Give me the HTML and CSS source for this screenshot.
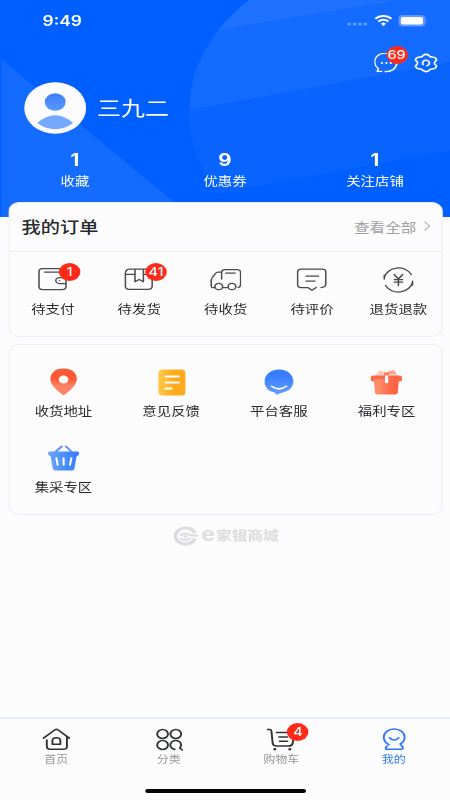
FILE: index.html
```html
<!DOCTYPE html>
<html lang="zh-CN">
<head>
<meta charset="utf-8">
<title>我的</title>
<link rel="stylesheet" href="styles.css">
</head>
<body>
<div class="screen">
  <header class="hero">
    <svg class="hero-bg" width="375" height="217" viewBox="0 0 375 217">
      <defs><clipPath id="disc"><circle cx="307.5" cy="112" r="150"/></clipPath></defs>
      <path d="M1 59L160 217H1z" fill="#146bff"/>
      <g clip-path="url(#disc)">
        <path d="M150 0h225v150L187 192l-37 8z" fill="#0863ff"/>
        <path d="M150 0h225v62L158 110z" fill="#146bff"/>
        <path d="M150 0h183L150 36z" fill="#1f71ff"/>
      </g>
    </svg>
    <div class="status">
      <span class="time">9:49</span>
      <div class="signals">
        <svg width="17" height="4" viewBox="0 0 17 4" fill="#6ba0ff"><circle cx="2" cy="2" r="1.500"/><circle cx="6.500" cy="2" r="1.500"/><circle cx="11" cy="2" r="1.500"/><circle cx="15.200" cy="2" r="1.500"/></svg>
        <svg class="wifi" width="15" height="11" viewBox="0 0 15 11" fill="none" stroke="#fff" stroke-width="2"><path d="M.7 3.700Q7.500-1.700 14.300 3.700M3.300 6.500Q7.500 3 11.700 6.500"/><path d="M7.500 7.300L9.700 8.800 7.500 11 5.300 8.800z" fill="#fff" stroke="none"/></svg>
        <svg width="25" height="12" viewBox="0 0 25 12"><rect width="22.500" height="11.500" rx="3.500" fill="#5f99ff"/><rect x="2" y="2" width="18.500" height="7.500" rx="1.800" fill="#fff"/><path d="M23.500 4q1.300 1.800 0 3.600z" fill="#8bb4ff"/></svg>
      </div>
    </div>
    <div class="tools">
      <span class="icon">
        <svg width="20" height="20" viewBox="0 0 20 20" fill="none" stroke="#fff" stroke-width="1.300" stroke-linecap="round"><path d="M14.500 2.300A8.600 8.600 0 0 0 3.200 15.400L2.500 18.300H6M9 18.500A8.600 8.600 0 0 0 18.600 9.500"/><path d="M6.300 10h.01M10 10h.01M13.700 10h.01" stroke-width="1.900"/></svg>
        <b class="badge">69</b>
      </span>
      <svg width="20" height="20" viewBox="0 0 20 20" fill="none" stroke="#fff" stroke-width="1.500" stroke-linecap="round" stroke-linejoin="round"><path d="M7.400 2.600Q10 .2 12.600 2.600Q13.400 4.200 15.200 4Q18.700 4.300 18.700 7.200Q17 8.800 17 10Q17 11.200 18.700 12.800Q18.700 15.700 15.200 16Q13.400 15.800 12.600 17.400Q10 19.800 7.400 17.400Q6.600 15.800 4.800 16Q1.300 15.700 1.300 12.800Q3 11.200 3 10Q3 8.800 1.300 7.200Q1.300 4.300 4.800 4Q6.600 4.200 7.400 2.600z"/><path d="M7.600 11.500A2.800 2.800 0 1 1 10.800 12.700"/></svg>
    </div>
    <div class="profile">
      <svg width="52" height="52" viewBox="0 0 52 52"><defs><linearGradient id="av" x2="0" y2="1"><stop stop-color="#3c7ff8"/><stop offset="1" stop-color="#5a98ff"/></linearGradient></defs><circle cx="26" cy="26" r="25.800" fill="#fcfcfe"/><circle cx="26" cy="20" r="8.700" fill="url(#av)"/><path d="M11 41Q26 25.500 41 41Q26 53.500 11 41z" fill="#74a9ff"/></svg>
      <span class="name">三九二</span>
    </div>
    <div class="stats">
      <div><b>1</b><span>收藏</span></div>
      <div><b>9</b><span>优惠券</span></div>
      <div><b>1</b><span>关注店铺</span></div>
    </div>
  </header>

  <section class="card orders">
    <div class="card-head">
      <h2>我的订单</h2>
      <span class="more">查看全部<svg width="6" height="10" viewBox="0 0 6 10" fill="none" stroke="#b5b5b8" stroke-width="1.100"><path d="M.8.7L5 5 .8 9.300"/></svg></span>
    </div>
    <div class="order-row">
      <div class="entry">
        <span class="icon"><svg class="line" width="26" height="24" viewBox="0 0 26 24"><path d="M24 9V4.500Q24 1.500 21 1.500H4.500Q1.500 1.500 1.500 4.500V19.500Q1.500 22.500 4.500 22.500H21Q24 22.500 24 19.500V10.500M6 5H18M24 10.500H18.500A3 3 0 0 0 18.500 16.500H24M18.500 13.500h.1"/></svg><b class="badge">1</b></span>
        <span>待支付</span>
      </div>
      <div class="entry">
        <span class="icon"><svg class="line" width="26" height="24" viewBox="0 0 26 24"><path d="M5 2H20.500L23.800 7V19Q23.800 22.300 20.500 22.300H4.800Q1.500 22.300 1.500 19V5.500Q2 2 5 2zM1.500 7.300H9.500M16.500 7.300H23.800M9.500 2V14.800L13 12.500 16.500 14.800V2"/></svg><b class="badge">41</b></span>
        <span>待发货</span>
      </div>
      <div class="entry">
        <span class="icon"><svg class="line" width="26" height="24" viewBox="0 0 26 24"><path d="M4 20.500H2Q1 20.500 1 19V13.500Q1 12 2 10.500L4.500 6.500Q5.300 5.200 7 5.200H9.700V12M9.700 5.200Q10 2.500 12.500 2.500H22.500Q25.500 2.500 25.500 5.500V17.500Q25.500 20 23.300 20.500M10.500 20.500H14.500M13 6H21"/><circle cx="7.300" cy="19.500" r="3.200"/><circle cx="18.300" cy="19.500" r="3.200"/></svg></span>
        <span>待收货</span>
      </div>
      <div class="entry">
        <span class="icon"><svg class="line" width="26" height="24" viewBox="0 0 26 24"><path d="M20.500 20.500Q24.500 20.500 24.500 17V5Q24.500 2 21.500 2H4Q1 2 1 5V17.500Q1 20.500 4 20.500H9.500L13 23.200 16.500 20.500M8 9H18.500M8 14H15.500"/></svg></span>
        <span>待评价</span>
      </div>
      <div class="entry">
        <span class="icon"><svg class="line" width="26" height="26" viewBox="0 0 26 26"><path d="M1.200 11A12 12 0 0 1 23.700 7.500M1.200 12V8M24.800 15A12 12 0 0 1 2.300 18.500M24.800 14V18M9.500 7.500L13 12 16.500 7.500M13 12V18.500M9.500 12.500H16.500M9.500 15H16.500"/></svg></span>
        <span>退货退款</span>
      </div>
    </div>
  </section>

  <section class="card services">
    <div class="entry">
      <svg width="30" height="30" viewBox="0 0 30 30"><defs><linearGradient id="pin" x2="0" y2="1"><stop offset=".4" stop-color="#ff5a35"/><stop offset=".65" stop-color="#ff8568"/></linearGradient></defs><path d="M15 1.500C7.500 1.500 4 6.500 4 12C4 18 9 23 15 28.500C21 23 26 18 26 12C26 6.500 22.500 1.500 15 1.500z" fill="url(#pin)"/><circle cx="15" cy="12.500" r="4" fill="#fff"/></svg>
      <span>收货地址</span>
    </div>
    <div class="entry">
      <svg width="30" height="30" viewBox="0 0 30 30"><defs><linearGradient id="note"><stop offset=".1" stop-color="#ffc443"/><stop offset=".55" stop-color="#ffaa1c"/></linearGradient></defs><rect x="4" y="2.500" width="22.500" height="26" rx="3.500" fill="url(#note)"/><path d="M10 9.500H21M10 15.500H21M10 21.500H15" stroke="#fff" stroke-width="1.800" stroke-linecap="round"/></svg>
      <span>意见反馈</span>
    </div>
    <div class="entry">
      <svg width="30" height="30" viewBox="0 0 30 30"><defs><linearGradient id="chat" x2="0" y2="1"><stop offset=".2" stop-color="#367dff"/><stop offset="1" stop-color="#639fff"/></linearGradient></defs><path d="M15.500 2.500C8.500 2.500 3.500 7.500 3.500 14.500C3.500 20.500 7 24.500 12 25.500L13.200 27.800 18.500 25.500C24.500 24 27.500 19.500 27.500 14.500C27.500 7.500 22.500 2.500 15.500 2.500z" fill="url(#chat)"/><path d="M9.300 19.200Q15.500 24.500 21.800 19.200" fill="none" stroke="#fff" stroke-width="1.500" stroke-linecap="round"/></svg>
      <span>平台客服</span>
    </div>
    <div class="entry">
      <svg width="30" height="30" viewBox="0 0 30 30"><defs><linearGradient id="gift"><stop offset=".2" stop-color="#ff8b69"/><stop offset=".75" stop-color="#ff6545"/></linearGradient></defs><path d="M7 8L9 3.500Q10 3 15 6.500L12 9z" fill="#ffc9a0"/><path d="M14 6Q20 2.500 21.500 3.500L24 8H15z" fill="#ff9d87"/><path d="M6 7H24V9H6z" fill="#e6d4d8"/><path d="M13 5.500h4v4h-4z" fill="#ff7a5b"/><rect x="2" y="8.500" width="26" height="6" rx="2" fill="#ff6847"/><path d="M4.500 12H25.500L24.500 25.500Q24.300 27.500 22.500 27.500H7.500Q5.700 27.500 5.500 25.500z" fill="url(#gift)"/><path d="M13.800 8.500H16.500V16H13.800z" fill="#fff"/></svg>
      <span>福利专区</span>
    </div>
    <div class="entry">
      <svg width="30" height="30" viewBox="0 0 30 30"><defs><linearGradient id="bk"><stop stop-color="#6ba5ff"/><stop offset="1" stop-color="#317bff"/></linearGradient></defs><path d="M8.500 8.500L13.500 3.500M21.500 8.500L17 3.500" stroke="#5594ff" stroke-width="1.800" stroke-linecap="round"/><path d="M3.500 8.500H26.500Q28 8.500 28 10Q28 12.500 25.800 13.500L24 25.500Q23.600 27.500 22 27.500H8Q6.400 27.500 6 25.500L4.200 13.500Q2 12.500 2 10Q2 8.500 3.500 8.500z" fill="url(#bk)"/><path d="M9 15L10 21.800M15 15V21.800M21.500 15L20.300 21.800" stroke="#fff" stroke-width="1.700" stroke-linecap="round"/></svg>
      <span>集采专区</span>
    </div>
  </section>

  <div class="brand">
    <svg width="21" height="20" viewBox="0 0 21 20" fill="none" stroke="#dcdce0"><path d="M18.500 12.500A8.300 8 0 1 1 18.300 7" stroke-width="3.200"/><path d="M6 9.500Q10.500 5.500 15 9.500H21M6 12Q10.500 16 15 12" stroke-width="2"/><circle cx="10.500" cy="10.500" r="1.500" fill="#dcdce0" stroke="none"/></svg>
    <span class="brand-e">e</span><span>家银商城</span>
  </div>

  <nav class="tabs">
    <div class="tab">
      <svg width="24" height="24" viewBox="0 0 24 24"><path d="M1.300 11.200L10.500 3Q12 1.800 13.500 3L22.700 11.200M4 13V19.500Q4 22.300 7 22.300H17.500Q20.800 22.300 20.800 19.500V10.500M8.700 17.300V13.500Q8.700 10.800 12 10.800T15.300 13.500V17.300z"/></svg>
      <span>首页</span>
    </div>
    <div class="tab">
      <svg width="24" height="24" viewBox="0 0 24 24"><circle cx="6.500" cy="7" r="4.500"/><circle cx="17.500" cy="7" r="4.500"/><circle cx="6.500" cy="18" r="4.500"/><path d="M16.500 22.400A4.500 4.500 0 1 1 20.800 21L22.800 23"/></svg>
      <span>分类</span>
    </div>
    <div class="tab">
      <span class="icon"><svg width="24" height="24" viewBox="0 0 24 24"><path d="M1 2.500H2.500Q4 2.500 4.200 4L5.200 16Q5.500 19 8.500 19H18.500Q21.500 19 22 16L22.500 11M8.500 5.500H18M10.500 10H17.500M11 14.300H17.500"/><path d="M7 22.300h.01M19.500 22.300h.01" stroke-width="2.500"/></svg><b class="badge">4</b></span>
      <span>购物车</span>
    </div>
    <div class="tab active">
      <svg width="24" height="24" viewBox="0 0 24 24"><path d="M8.200 17.600Q3.800 15 3.800 10.200A8.700 8.200 0 0 1 21.200 10.200Q21.200 14.500 17.600 17L19.600 20Q20.300 22.300 18.300 22.300H6.500Q5 22.300 5.500 20.500L6.800 18.800M8.500 10.800Q12.500 15.300 16.300 10.800"/></svg>
      <span>我的</span>
    </div>
  </nav>
  <div class="home-bar"></div>
</div>
</body>
</html>
```
FILE: styles.css
```css
* { box-sizing: border-box; }
html, body { margin: 0; overflow: hidden; }
body {
  width: 450px;
  height: 800px;
  background: #fcfcfd;
  font-family: "Noto Sans CJK SC", sans-serif;
  color: #27292d;
}
svg { display: block; flex: none; }

/* The 375-unit layout is stretched to fill the 450px viewport. */
.screen {
  width: 375px;
  height: 800px;
  display: flex;
  flex-direction: column;
  transform: scaleX(1.2);
  transform-origin: 0 0;
}

.hero {
  position: relative;
  flex: none;
  height: 217px;
  background: #0060ff;
  color: #fff;
}
.hero > div { position: relative; }
.hero-bg { position: absolute; top: 0; left: 0; }

.status {
  display: flex;
  justify-content: space-between;
  height: 40px;
  padding: 0 18px 0 35.5px;
}
.time { font: 600 14.5px/41px Inter, sans-serif; }
.signals { display: flex; align-items: center; gap: 5.500px; }
.signals svg:first-child { margin-top: 8px; }
.signals svg:last-child { margin-top: 1px; }

.tools {
  display: flex;
  justify-content: flex-end;
  gap: 13.500px;
  height: 40px;
  padding: 13px 10px 0 0;
}
.icon { position: relative; display: block; }
.badge {
  position: absolute;
  min-width: 18px;
  height: 18px;
  border-radius: 9px;
  background: #ff2a1a;
  color: #fff;
  font: 500 12px/18px Inter, sans-serif;
  text-align: center;
}
.tools .badge { top: -7px; left: 10px; width: 18px; }

.profile {
  display: flex;
  align-items: center;
  gap: 8.500px;
  height: 52px;
  margin-top: 2px;
  padding-left: 20.300px;
}
.name { font-size: 20px; line-height: 30px; }

.stats { display: flex; padding-top: 16px; }
.stats div { flex: 1; text-align: center; }
.stats b { display: block; font: 700 17px/20px Inter, sans-serif; }
.stats span { display: block; font-size: 12px; line-height: 18px; margin-top: 2px; }

.card {
  position: relative;
  flex: none;
  margin: 0 6px 0 7px;
  border: 1px solid #e9edfb;
  border-radius: 9px;
  background: #fcfcfd;
}
.orders { height: 135px; margin-top: -15px; }
.card-head {
  display: flex;
  align-items: center;
  justify-content: space-between;
  height: 49px;
  padding: 0 9px 2px 10px;
  border-bottom: 1px solid #e9edfb;
}
h2 { margin: 0; font-size: 16px; font-weight: 500; }
.more { display: flex; align-items: center; gap: 6px; font-size: 13px; color: #a0a0a3; }

.order-row { display: flex; padding-top: 15px; }
.entry {
  display: flex;
  flex: 1;
  flex-direction: column;
  align-items: center;
  font-size: 12px;
  line-height: 18px;
}
.order-row .icon { height: 33px; }
.order-row .badge { top: -4px; left: 18px; }
.line { fill: none; stroke: #484a4e; stroke-width: 1.250; stroke-linecap: round; stroke-linejoin: round; }

.services {
  display: grid;
  grid-template-columns: repeat(4, 1fr);
  grid-auto-rows: 76px;
  height: 171px;
  margin-top: 7px;
  padding: 22px 1px 0 0;
}
.services .entry { gap: 5px; }

.brand {
  display: flex;
  align-items: center;
  justify-content: center;
  height: 20px;
  margin-top: 11px;
  padding-left: 1px;
  color: #dfdfe3;
  font-size: 13px;
  font-weight: 900;
  line-height: 18px;
}
.brand span:last-child { margin-top: -2px; }
.brand-e { margin: -3px 1px 0 3px; font: 800 19px/20px Inter, sans-serif; }

.tabs {
  display: flex;
  height: 71px;
  margin-top: auto;
  padding-top: 8px;
  border-top: 2px solid #e8effc;
}
.tab {
  display: flex;
  flex: 1;
  flex-direction: column;
  align-items: center;
  font-size: 10px;
  line-height: 15px;
  color: #96969a;
}
.tab svg { fill: none; stroke: #303236; stroke-width: 1.600; stroke-linecap: round; stroke-linejoin: round; }
.tab .badge { top: -4px; left: 17px; }
.active { color: #2d78ff; }
.tab.active svg { stroke: #2d78ff; }
.home-bar { flex: none; width: 134px; height: 4px; margin: 1px auto 7px; border-radius: 2px; background: #050505; }
```
